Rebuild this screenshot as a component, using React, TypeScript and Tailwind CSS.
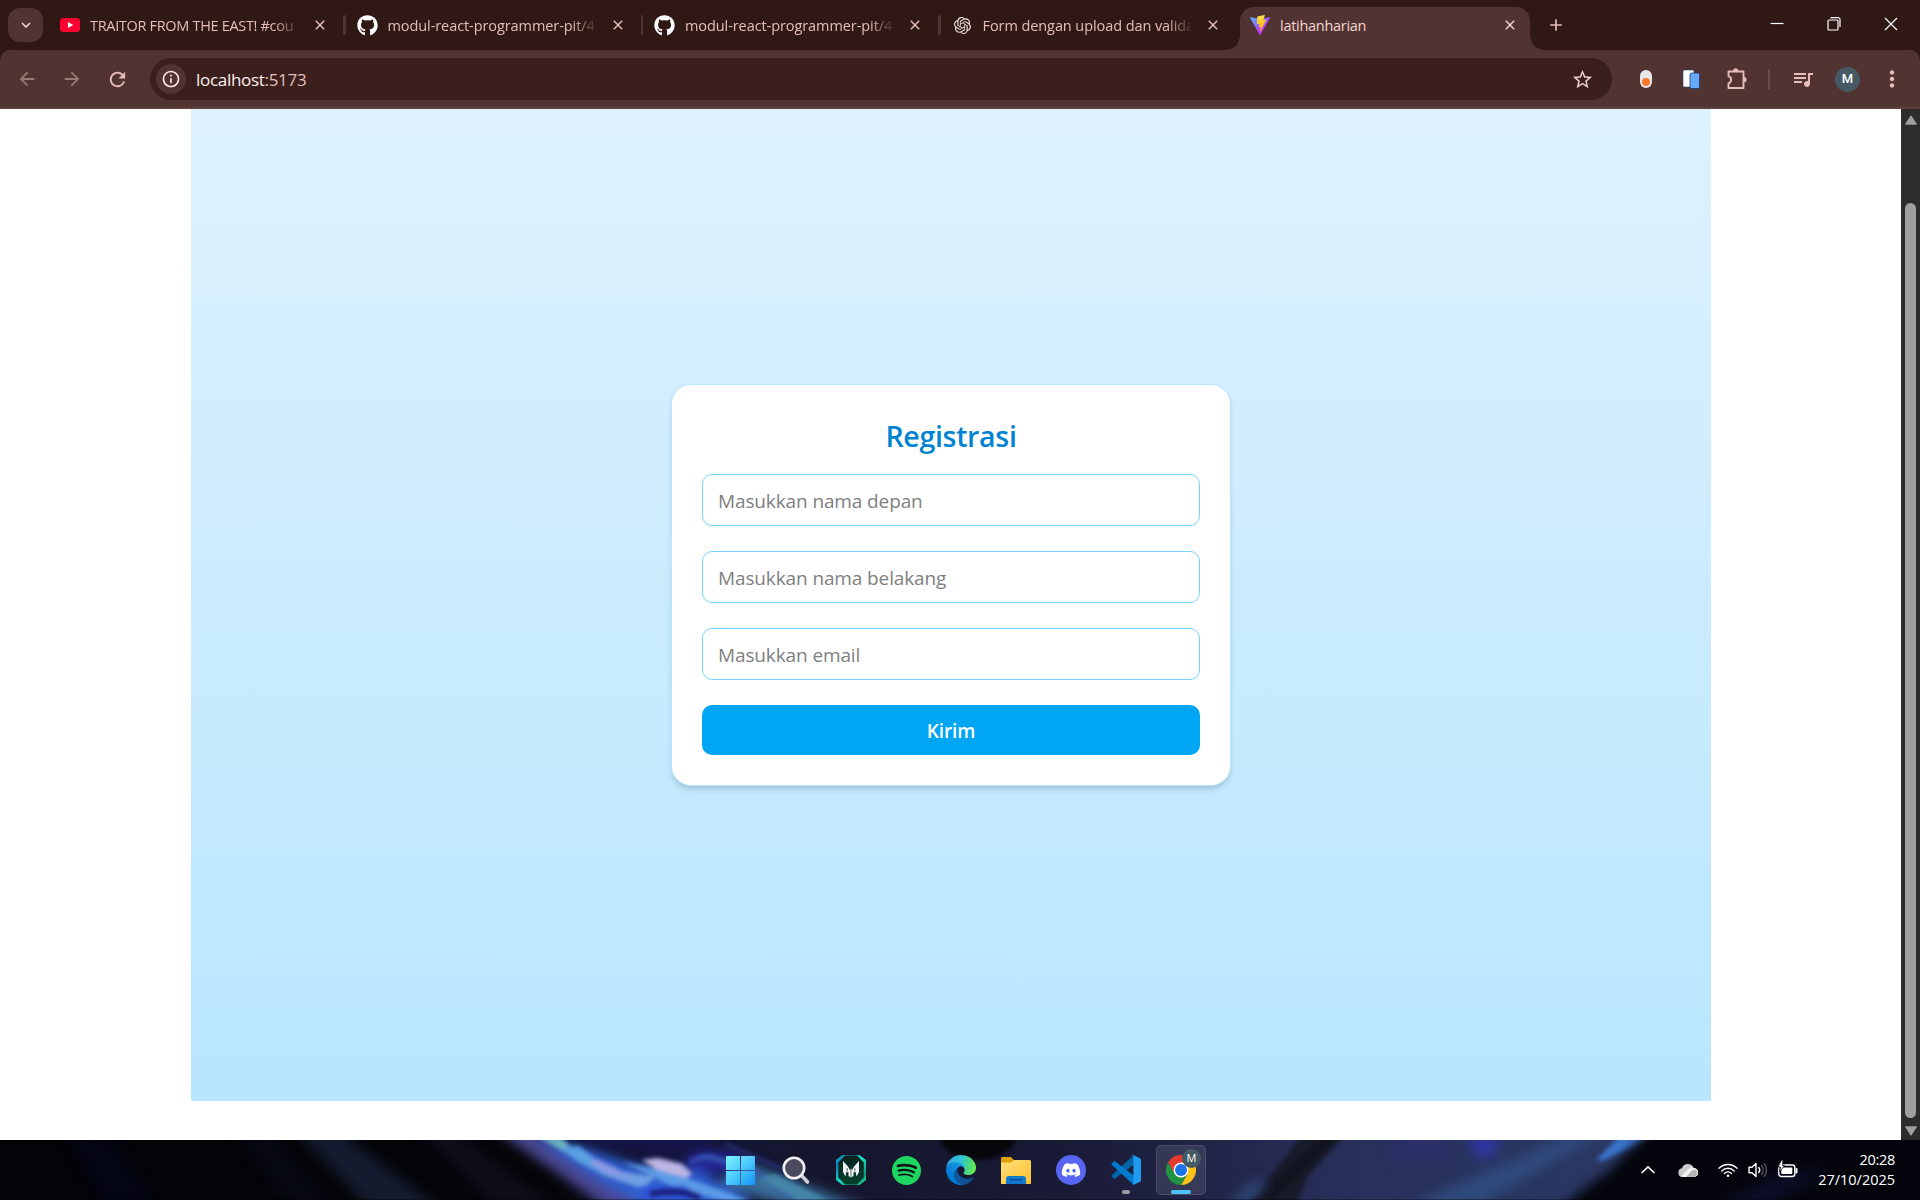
import type { ReactNode } from 'react';
import {
  MdArrowBack, MdArrowForward, MdRefresh, MdInfoOutline, MdStarBorder,
  MdQueueMusic, MdMoreVert, MdClose, MdExpandMore, MdAdd,
} from 'react-icons/md';
import { FaGithub, FaDiscord } from 'react-icons/fa';
import { SiOpenai, SiSpotify } from 'react-icons/si';

function YoutubeIcon() {
  return (
    <svg viewBox="0 0 20 14" className="h-[14px] w-5">
      <rect width="20" height="14" rx="3.5" fill="#ff0033" />
      <path d="M8 4l5.2 3L8 10z" fill="#fff" />
    </svg>
  );
}

function ViteIcon() {
  return (
    <svg viewBox="1.9 1.9 28.2 28.2" className="size-5">
      <defs>
        <linearGradient id="viteV" x1="6" y1="33" x2="235" y2="344" gradientTransform="scale(.07)" gradientUnits="userSpaceOnUse">
          <stop stopColor="#41d1ff" />
          <stop offset="1" stopColor="#bd34fe" />
        </linearGradient>
        <linearGradient id="viteB" x1="0.4" y1="0" x2="0.6" y2="1">
          <stop stopColor="#ffea83" />
          <stop offset=".15" stopColor="#ffdd35" />
          <stop offset="1" stopColor="#ffa800" />
        </linearGradient>
      </defs>
      <path fill="url(#viteV)" d="M29.8836 6.146L16.7418 29.6457c-.2714.4851-.9684.488-1.2437.0052L2.0956 6.1482c-.2999-.5262.1498-1.1635.746-1.057l13.156 2.3516a.7144.7144 0 00.2537-.0004l12.8808-2.3478c.5942-.1083 1.0467.5236.7513 1.0514z" />
      <path fill="url(#viteB)" d="M22.2644 2.0069l-9.7253 1.9056a.3571.3571 0 00-.2879.3294l-.5982 10.1038c-.0141.238.2045.4227.4367.3691l2.7077-.6248c.2534-.0585.4823.1647.4302.4194l-.8044 3.9393c-.0542.265.1947.4918.4536.4132l1.6724-.5082c.2593-.0787.5084.149.4536.4141l-1.2785 6.1877c-.08.387.4348.598.6495.2662l.1435-.2215 7.9246-15.8166c.1327-.2648-.096-.5667-.3868-.5106l-2.7871.5379c-.2619.0505-.4848-.1934-.4109-.4497l1.8191-6.3056c.0739-.2567-.1497-.5009-.4118-.4493z" />
    </svg>
  );
}

function PuzzleIcon() {
  return (
    <svg viewBox="0 0 22 22" className="ml-[26px] size-[22px]" fill="none" stroke="currentColor" strokeWidth="1.9" strokeLinejoin="round">
      <path d="M2.500 3.500H17.500V20H2.500V15.300C6 14.300 6 9.200 2.500 8.200Z" />
      <path d="M7.300 3A2.400 2.400 0 0 1 12.100 3ZM18 9.300A2.400 2.400 0 0 1 18 14.100Z" fill="currentColor" strokeWidth=".6" />
    </svg>
  );
}

type TabProps = { icon: ReactNode; title: string; divider?: boolean; spacing?: string };

function Tab({ icon, title, divider, spacing = '' }: TabProps) {
  return (
    <div className="flex h-[34px] w-[297.5px] shrink-0 items-center">
      <div className="flex w-[30px] shrink-0 items-center">{icon}</div>
      <div className={`w-[208px] shrink-0 overflow-hidden pt-px whitespace-nowrap text-[14.5px] text-[#e6bdb8] [mask-image:linear-gradient(to_right,#000_184px,transparent_210px)] ${spacing}`}>
        {title}
      </div>
      <MdClose className="ml-[14px] size-4 text-[#eec6c1]" />
      <div className={divider ? 'ml-[15px] h-5 w-[2.5px] rounded-full bg-[#513331]' : 'hidden'} />
    </div>
  );
}

function TabStrip() {
  return (
    <div className="flex h-[50px] shrink-0 bg-[#301915]">
      <button className="ml-2 mt-2 flex h-[34px] w-[35px] shrink-0 items-center justify-center rounded-xl bg-[#513331] text-[#ffdad6]">
        <MdExpandMore className="size-[18px]" />
      </button>
      <div className="ml-[17px] mt-2 flex w-[1180px] shrink-0">
        <Tab icon={<YoutubeIcon />} title="TRAITOR FROM THE EAST! #cou" divider spacing="tracking-[-0.32px]" />
        <Tab icon={<FaGithub className="-ml-px size-[21px] text-white" />} title="modul-react-programmer-pit/4" divider spacing="tracking-[-0.08px]" />
        <Tab icon={<FaGithub className="-ml-px size-[21px] text-white" />} title="modul-react-programmer-pit/4" divider spacing="tracking-[-0.08px]" />
        <Tab icon={<SiOpenai className="ml-px size-[17px] text-[#f2e6e4]" />} title="Form dengan upload dan valida" spacing="tracking-[-0.08px]" />
      </div>
      <div className="relative mt-[7px] flex h-[43px] w-[290px] shrink-0 items-start rounded-t-[14px] bg-[#513331] pt-2 text-[#ffdad6]">
        <div className="absolute bottom-0 -left-3.5 size-3.5 bg-[radial-gradient(circle_at_0_0,transparent_13.5px,#513331_14px)]" />
        <div className="absolute bottom-0 -right-3.5 size-3.5 bg-[radial-gradient(circle_at_100%_0,transparent_13.5px,#513331_14px)]" />
        <div className="flex h-5 w-full items-center pl-2.5">
          <ViteIcon />
          <span className="ml-2.5 pt-px text-[14.5px] tracking-[-0.28px] text-[#f5d5d1]">latihanharian</span>
          <MdClose className="ml-auto mr-3 size-4" />
        </div>
      </div>
      <MdAdd className="ml-4 mt-[15px] size-5 shrink-0 text-[#e6bdb8]" />
      <div className="ml-auto mr-[21px] flex h-12 items-center gap-[41px]">
        <svg viewBox="0 0 16 16" className="size-4" fill="none" stroke="#fff" strokeWidth="1.2"><path d="M1.500 7.500h13" /></svg>
        <svg viewBox="0 0 16 16" className="size-4" fill="none" stroke="#fff" strokeWidth="1.2">
          <rect x="2" y="4" width="10" height="10" rx="1" />
          <path d="M4.500 1.600h7.500a2 2 0 0 1 2 2v7.500" />
        </svg>
        <svg viewBox="0 0 16 16" className="size-4" fill="none" stroke="#fff" strokeWidth="1.2"><path d="M2 2l12 12M14 2L2 14" /></svg>
      </div>
    </div>
  );
}

function Toolbar() {
  return (
    <div className="bg-[#301915]">
      <div className="flex h-[59px] items-center rounded-t-[10px] border-b-2 border-[#5c403e] bg-[#513331] pt-px pl-4 text-[#e6bdb8]">
        <MdArrowBack className="size-[22px] opacity-50" />
        <MdArrowForward className="ml-[23px] size-[22px] opacity-50" />
        <MdRefresh className="ml-[23px] size-[23px]" />
        <div className="ml-[21px] flex h-[42px] w-[1462px] items-center rounded-full bg-[#3b1f1c] pl-1.5">
          <div className="flex size-[30px] items-center justify-center rounded-full bg-[#513331]">
            <MdInfoOutline className="size-5 text-[#ffe6e3]" />
          </div>
          <span className="ml-2.5 pt-px text-[17px] tracking-[-0.3px] text-[#fff0ee]">
            localhost<span className="text-[#e3bfbb]">:5173</span>
          </span>
          <MdStarBorder className="ml-auto mr-[18px] size-[23px] text-[#e6cfcc]" />
        </div>
        <svg viewBox="0 0 12 18" className="ml-[28px] h-[18px] w-3">
          <rect width="12" height="18" rx="6" fill="#e8e8ea" />
          <circle cx="6" cy="12" r="4" fill="#f8792b" />
        </svg>
        <svg viewBox="0 0 18 20" className="ml-[30px] h-5 w-[18px]">
          <rect x="1" y="1" width="11" height="17" rx="1.5" fill="#fff" stroke="#2a4a7a" strokeWidth=".6" />
          <rect x="8" y="4" width="9.5" height="15.5" rx="1.5" fill="#66a8fb" stroke="#1e3a66" strokeWidth=".8" />
        </svg>
        <PuzzleIcon />
        <div className="ml-5 h-5 w-0.5 bg-[#6f4a47]" />
        <MdQueueMusic className="ml-[21px] size-6" />
        <div className="ml-5 flex size-[25px] items-center justify-center rounded-full bg-[#455a64] font-['Roboto'] text-[13px] font-medium text-white">M</div>
        <MdMoreVert className="ml-[19px] size-[26px]" />
      </div>
    </div>
  );
}

const fields = ['Masukkan nama depan', 'Masukkan nama belakang', 'Masukkan email'];

function Page() {
  return (
    <div className="flex h-[1031px] shrink-0 bg-white">
      <main className="ml-[191px] flex h-[992px] w-[1520px] flex-col items-center bg-[linear-gradient(to_bottom,#dff2fe_-39px,#b8e6fe_992px)] pt-[275px]">
        <form className="flex h-[402px] w-[560px] flex-col gap-[25px] rounded-[20px] border border-[#b8e6fe] bg-white px-[30px] pt-[30px] shadow-[0_5px_7.5px_-1px_rgb(0_0_0/0.1),0_2.5px_5px_-2px_rgb(0_0_0/0.1)]">
          <h1 className="-mb-[6px] h-10 pt-px text-center text-[28.5px] leading-10 font-semibold tracking-[-0.3px] text-[#0084d1]">Registrasi</h1>
          {fields.map((placeholder) => (
            <input
              key={placeholder}
              placeholder={placeholder}
              className="h-[52px] w-full shrink-0 rounded-[10px] border border-[#74d4ff] px-[15px] pt-0.5 text-[19px] tracking-[-0.12px] placeholder:text-[#808080]"
            />
          ))}
          <button type="button" className="h-[50px] shrink-0 rounded-[10px] bg-[#00a6f4] pt-0.5 text-[19px] font-semibold tracking-[-0.1px] text-white">Kirim</button>
        </form>
      </main>
      <div className="ml-auto flex w-[19px] flex-col items-center bg-[#2c2c2c]">
        <svg viewBox="0 0 12 10" className="mt-1.5 h-2.5 w-3"><path d="M6 .8L11.5 9.2H.5z" fill="#9f9f9f" stroke="#9f9f9f" strokeLinejoin="round" /></svg>
        <div className="mt-[78px] h-[915px] w-[11px] rounded-full bg-[#9f9f9f]" />
        <svg viewBox="0 0 12 10" className="mt-[8px] h-2.5 w-3"><path d="M6 9.2L11.5.8H.5z" fill="#9f9f9f" stroke="#9f9f9f" strokeLinejoin="round" /></svg>
      </div>
    </div>
  );
}

function Wallpaper() {
  return (
    <svg viewBox="0 0 1920 60" className="absolute inset-0 h-[60px] w-[1920px]" preserveAspectRatio="none">
      <defs>
        <linearGradient id="base" x1="0" x2="1920" y1="0" y2="0" gradientUnits="userSpaceOnUse">
          <stop offset="0" stopColor="#040308" />
          <stop offset=".29" stopColor="#050509" />
          <stop offset=".34" stopColor="#14143c" />
          <stop offset=".42" stopColor="#15162d" />
          <stop offset=".55" stopColor="#191a35" />
          <stop offset=".64" stopColor="#23264a" />
          <stop offset=".7" stopColor="#272f5a" />
          <stop offset=".84" stopColor="#2b3864" />
          <stop offset="1" stopColor="#2a3a6a" />
        </linearGradient>
        <filter id="b2" x="-20%" y="-60%" width="140%" height="220%" colorInterpolationFilters="sRGB"><feGaussianBlur stdDeviation="2.2" /></filter>
        <filter id="b6" x="-20%" y="-60%" width="140%" height="220%" colorInterpolationFilters="sRGB"><feGaussianBlur stdDeviation="6" /></filter>
      </defs>
      <rect width="1920" height="60" fill="url(#base)" />
      <g filter="url(#b6)">
        <path d="M60-20h35l70 100H115z" fill="#03051a" opacity=".7" />
        <path d="M230-20h30l80 100H300z" fill="#070a18" opacity=".7" />
        <path d="M285-20h40l130 100h-74z" fill="#131b2e" />
        <path d="M410-20h30l130 100h-60z" fill="#0d0e1a" />
        <path d="M545-20h165v34L600 8z" fill="#17144a" />
        <path d="M490-14h34l60 34 70 50h-44z" fill="#4a4690" />
        <path d="M530-6l50 12 60 20 60 4 50 30v10h-100L600 42z" fill="#2f5fd0" />
        <path d="M740 20l140 54h-70l-90-30z" fill="#3a6f9d" />
        <ellipse cx="715" cy="22" rx="30" ry="10" fill="#25279a" />
      </g>
      <g filter="url(#b2)">
        <path d="M538-3l22 2 25 18 35 14 35 6-12 12-40-14z" fill="#6f9fe0" />
        <path d="M540-3h20l8 6-6 8z" fill="#68b0bd" />
        <path d="M560 8l18-2 14 10 16 12-10 4-20-10z" fill="#5a9fe0" />
        <path d="M594 18l22 10 16 10-24-4-18-10z" fill="#8c98e4" />
        <path d="M642 20l16-2 24 6 10 10-8 6-22-6z" fill="#bdb5e2" />
        <path d="M622 22l20 4 50 14 40 14 20 10h-20l-60-18z" fill="#5b9be6" />
        <path d="M640 46h44l20 14h-60z" fill="#3055d8" />
        <path d="M690 22q20-12 36 2" fill="none" stroke="#3446b4" strokeWidth="5" />
        <path d="M650 54q30-6 50 4" fill="none" stroke="#191c75" strokeWidth="6" />
        <path d="M700 18q40 0 70 24t50 22" fill="none" stroke="#3558aa" strokeWidth="4" />
        <path d="M775 34l55 28h-30l-40-24z" fill="#4586a8" />
        <path d="M725 4l60 26" stroke="#252c70" strokeWidth="4" />
        <ellipse cx="978" cy="-4" rx="38" ry="24" fill="#07070b" />
        <path d="M1302-4h42l-36 40-12 28h-48z" fill="#181a29" />
        <path d="M1322-4h18l-70 68h-20z" fill="#10131d" opacity=".7" />
      </g>
      <g filter="url(#b6)">
        <ellipse cx="1484" cy="4" rx="14" ry="14" fill="#2f35a0" />
        <ellipse cx="1420" cy="10" rx="30" ry="12" fill="#293069" />
        <path d="M1570-5h30l-120 70h-70z" fill="#2f4a7c" />
        <path d="M1228 64l24-24 16 4-20 20z" fill="#2c4472" />
      </g>
      <path d="M1598 18l24-24h40l-62 28z" fill="#3a75cc" filter="url(#b2)" />
      <path d="M1660-20H2100V100H1530L1575 56 1610 30z" fill="#04050c" filter="url(#b6)" />
      <path d="M1690 80l90-50h50l-80 50z" fill="#0a0d24" filter="url(#b6)" />
      <rect y="59" width="1920" height="1" fill="#000" opacity=".3" />
    </svg>
  );
}

function WindowsIcon() {
  return (
    <svg viewBox="0 0 29 29" className="-ml-px size-[29px]">
      <defs>
        <linearGradient id="win" x1="0" y1="0" x2="29" y2="29" gradientUnits="userSpaceOnUse">
          <stop stopColor="#7df4ff" /><stop offset=".5" stopColor="#4cc9fb" /><stop offset="1" stopColor="#0f93f5" />
        </linearGradient>
      </defs>
      <path fill="url(#win)" d="M1 0h13v14H0V1a1 1 0 0 1 1-1zM15 0h13a1 1 0 0 1 1 1v13H15zM0 15h14v14H1a1 1 0 0 1-1-1zM15 15h14v13a1 1 0 0 1-1 1H15z" />
    </svg>
  );
}

function SearchIcon() {
  return (
    <svg viewBox="0 0 30 30" className="size-[30px]">
      <path d="M20 20l6.500 7" stroke="#cfd0d4" strokeWidth="3.600" strokeLinecap="round" />
      <circle cx="13" cy="13" r="10.200" fill="#4a4b61" stroke="#f1f1f3" strokeWidth="2.600" />
    </svg>
  );
}

function PredatorIcon() {
  return (
    <svg viewBox="0 0 30 30" className="size-[30px]">
      <defs>
        <linearGradient id="pr" x1="0" y1="0" x2="1" y2="1">
          <stop stopColor="#12b8e4" /><stop offset=".2" stopColor="#0a86b8" /><stop offset=".5" stopColor="#16e0c6" /><stop offset=".8" stopColor="#159b7a" /><stop offset="1" stopColor="#27f0a5" />
        </linearGradient>
        <linearGradient id="prIn" x1="0" y1="0" x2="0" y2="1"><stop stopColor="#06201f" /><stop offset="1" stopColor="#07432f" /></linearGradient>
      </defs>
      <path d="M6.500 0h17L30 5v20l-6.500 5h-17L0 25V5z" fill="url(#pr)" />
      <path d="M9 .6h12l6.800 6.900v15L21 29.400H9l-6.800-6.900v-15z" fill="url(#prIn)" />
      <path d="M7 6l5 5.500 1.500 3h3l1.500-3L23 6v11l-2.500 4.500-1-5-2 1v3.500L15 22.500 12.500 21v-3.500l-2-1-1 5L7 17z" fill="#f1f6f5" />
      <path d="M15 13v9M11.200 13v3M18.800 13v3" stroke="#5b6f6c" strokeWidth="1" />
    </svg>
  );
}

function EdgeIcon() {
  return (
    <svg viewBox="4.600 4.900 256 256" className="size-[30px]">
      <defs>
        <linearGradient id="ea" x1="63" y1="178" x2="241" y2="178" gradientUnits="userSpaceOnUse"><stop stopColor="#0c59a4" /><stop offset="1" stopColor="#114a8b" /></linearGradient>
        <linearGradient id="eb" x1="157" y1="100" x2="46" y2="221" gradientUnits="userSpaceOnUse"><stop stopColor="#1b9de2" /><stop offset=".16" stopColor="#1595df" /><stop offset=".67" stopColor="#0680d7" /><stop offset="1" stopColor="#0078d4" /></linearGradient>
        <linearGradient id="ec" x1="20" y1="60" x2="250" y2="120" gradientUnits="userSpaceOnUse"><stop stopColor="#35a9e6" /><stop offset=".45" stopColor="#2fc4d8" /><stop offset=".75" stopColor="#48d883" /><stop offset="1" stopColor="#66eb4e" /></linearGradient>
      </defs>
      <path fill="url(#ea)" d="M235.680 195.460a93.730 93.730 0 0 1-10.540 4.710 101.870 101.870 0 0 1-35.900 6.460c-47.320 0-88.540-32.550-88.540-74.320A31.480 31.480 0 0 1 117.130 105c-42.800 1.800-53.800 46.400-53.800 72.530 0 73.880 68.090 81.370 82.760 81.370 7.910 0 19.840-2.300 27-4.560l1.310-.44a128.340 128.340 0 0 0 66.600-52.800 4 4 0 0 0-5.320-5.640Z" />
      <path fill="url(#eb)" d="M110.340 246.340A79.200 79.200 0 0 1 87.600 225a80.720 80.720 0 0 1 29.530-120c3.120-1.470 8.450-4.130 15.540-4a32.350 32.350 0 0 1 25.690 13 31.880 31.880 0 0 1 6.360 18.660c0-.21 24.460-79.600-80-79.600-43.900 0-80 41.660-80 78.210a130.150 130.150 0 0 0 12.110 56 128 128 0 0 0 156.380 67.110 75.550 75.550 0 0 1-62.780-8z" />
      <path fill="url(#ec)" d="M156.940 153.780c-.81 1.050-3.300 2.500-3.300 5.660 0 2.610 1.700 5.120 4.720 7.230 14.380 10 41.490 8.680 41.560 8.680a59.560 59.560 0 0 0 30.270-8.350 61.380 61.380 0 0 0 30.430-52.880c.26-22.410-8-37.310-11.340-43.910-21.190-41.450-66.930-65.290-116.670-65.290a128 128 0 0 0-128 126.200c.48-36.540 36.800-66.050 80-66.050 3.500 0 23.460.34 42 10.070 16.340 8.580 24.900 18.940 30.850 29.210 6.180 10.670 7.280 24.150 7.280 29.520s-2.740 13.330-7.800 19.910z" />
    </svg>
  );
}

function FolderIcon() {
  return (
    <svg viewBox="0 0 30 30" className="size-[30px]">
      <defs><linearGradient id="fo" x1="0" y1="0" x2="1" y2="1"><stop stopColor="#ffe07a" /><stop offset="1" stopColor="#fcc02e" /></linearGradient></defs>
      <path d="M0 3.500A1.500 1.500 0 0 1 1.500 2h8.300L13 5v6H0z" fill="#e0a106" />
      <path d="M0 7.500h10l3-2.500h15.500A1.500 1.500 0 0 1 30 6.500V29H0z" fill="url(#fo)" />
      <path d="M5 29v-5a3 3 0 0 1 3-3h14a3 3 0 0 1 3 3v5z" fill="#1279cd" />
      <path d="M9 24.700h12" stroke="#0a4a8c" strokeWidth="1.200" strokeLinecap="round" />
    </svg>
  );
}

function VscodeIcon() {
  return (
    <svg viewBox="0 0 30 30" className="size-[30px]">
      <path d="M29 3.400L22.500.3 1 20c-.6.600-.6 1.400 0 2l1.700 1.500c.5.400 1.100.4 1.600.1L28.500 5.300z" fill="#0065a9" />
      <path d="M29 26.600l-6.500 3.100L1 10c-.6-.6-.6-1.400 0-2l1.700-1.500c.5-.4 1.100-.4 1.600-.1L28.500 24.700z" fill="#007acc" />
      <path d="M22.500 29.700c-.7.300-1.500.1-2-.4.700.700 1.900.2 1.900-.8V1.500c0-1-1.200-1.500-1.900-.8.500-.5 1.300-.7 2-.4l6.400 3c.7.300 1.100 1 1.100 1.700v20c0 .7-.4 1.400-1.100 1.700z" fill="#1f9cf0" />
    </svg>
  );
}

function ChromeIcon() {
  const wedge = 'M-13-7.500A15 15 0 0 1 13-7.500L0-7.500L0 0L-6.500 3.750Z';
  return (
    <svg viewBox="-15 -15 30 30" className="size-[30px]">
      <path d={wedge} fill="#e33b2e" />
      <path d={wedge} fill="#fbc116" transform="rotate(120)" />
      <path d={wedge} fill="#229342" transform="rotate(240)" />
      <circle r="7.500" fill="#fff" />
      <circle r="6" fill="#1a73e8" />
    </svg>
  );
}

function Slot({ children }: { children: ReactNode }) {
  return <div className="flex size-[50px] items-center justify-center">{children}</div>;
}

function Taskbar() {
  return (
    <div className="relative h-[60px] overflow-hidden bg-black">
      <Wallpaper />
      <div className="relative flex h-[60px] items-center">
        <nav className="ml-[716px] flex gap-[5px]">
          <Slot><WindowsIcon /></Slot>
          <Slot><SearchIcon /></Slot>
          <Slot><PredatorIcon /></Slot>
          <Slot>
            <div className="flex size-[29px] items-center justify-center rounded-full bg-[#10131c]"><SiSpotify className="size-[29px] text-[#1ed760]" /></div>
          </Slot>
          <Slot><EdgeIcon /></Slot>
          <Slot><FolderIcon /></Slot>
          <Slot>
            <div className="flex size-[30px] items-center justify-center rounded-full bg-[#5865f2]"><FaDiscord className="size-5 text-white" /></div>
          </Slot>
          <div className="relative flex size-[50px] items-center justify-center">
            <VscodeIcon />
            <div className="absolute bottom-px left-[21px] h-1 w-2 rounded-full bg-[#9b9ba6]" />
          </div>
          <div className="relative flex size-[50px] items-center justify-center rounded-[5px] border border-white/10 bg-white/10">
            <ChromeIcon />
            <div className="absolute top-[3px] right-1 flex size-[19px] items-center justify-center rounded-full bg-[#455a64] text-[11px] font-medium text-white">M</div>
            <div className="absolute bottom-0 left-[14px] h-1 w-5 rounded-full bg-[#4cc2ff]" />
          </div>
        </nav>
        <div className="ml-auto flex items-center">
          <svg viewBox="0 0 16 10" className="h-2.5 w-4" fill="none" stroke="#fff" strokeWidth="1.700"><path d="M1.500 8L8 1.800 14.500 8" /></svg>
          <svg viewBox="0 0 20 14" className="ml-[22px] h-[14px] w-5">
            <path d="M4.500 14a4.400 4.400 0 0 1-.6-8.700A6.300 6.300 0 0 1 15.700 5 4.500 4.500 0 0 1 15.500 14z" fill="#c9c9c9" />
            <path d="M3 13.500L12 4.500a5 5 0 0 1 4 .5 4.500 4.500 0 0 1-.5 9h-11z" fill="#f2f2f2" />
            <path d="M8 14l5-5.500a4 4 0 0 1 6-.5 4.500 4.500 0 0 1-3.500 6z" fill="#b5b5b5" />
          </svg>
          <svg viewBox="0 0 20 16" className="ml-5 h-4 w-5" fill="none" stroke="#fff" strokeWidth="1.400" strokeLinecap="round">
            <path d="M1 6.200a12.700 12.700 0 0 1 18 0M3.800 8.900a8.700 8.700 0 0 1 12.400 0M6.500 11.500a5 5 0 0 1 7 0" />
            <circle cx="10" cy="13.800" r="1.300" fill="#fff" stroke="none" />
          </svg>
          <svg viewBox="0 0 20 18" className="ml-2.5 h-[18px] w-5" fill="none" stroke="#fff" strokeWidth="1.400" strokeLinecap="round" strokeLinejoin="round">
            <path d="M1 6.300h3l4-3.800v13L4 11.700H1z" />
            <path d="M10.800 6.500a4 4 0 0 1 0 5" />
            <path d="M13.500 4.500a7 7 0 0 1 0 9M16.300 2.800a10 10 0 0 1 0 12.400" stroke="#56565e" />
          </svg>
          <svg viewBox="0 0 20 18" className="ml-2.5 h-[18px] w-5 overflow-visible">
            <rect x=".8" y="4" width="16" height="11.500" rx="2.500" fill="none" stroke="#fff" strokeWidth="1.400" />
            <path d="M18.500 8v3.500" stroke="#fff" strokeWidth="2" strokeLinecap="round" />
            <rect x="3.300" y="6.500" width="11" height="6.500" rx=".8" fill="#fff" />
            <path d="M3.500-1L0 6H2.500L1.500 11 6.500 4.500H4.500L5-1z" fill="#fff" stroke="#08090f" strokeWidth=".8" />
          </svg>
          <div className="mr-[25px] ml-[15px] w-[82px] pb-px text-right text-[14.5px] leading-5 whitespace-nowrap text-white">
            <div className="tracking-[-0.3px]">20:28</div>
            <div className="tracking-[-0.02px]">27/10/2025</div>
          </div>
        </div>
      </div>
    </div>
  );
}

export default function App() {
  return (
    <div className="flex h-[1200px] w-[1920px] flex-col overflow-hidden font-['Segoe_UI','Open_Sans','Noto_Sans',sans-serif]">
      <TabStrip />
      <Toolbar />
      <Page />
      <Taskbar />
    </div>
  );
}
